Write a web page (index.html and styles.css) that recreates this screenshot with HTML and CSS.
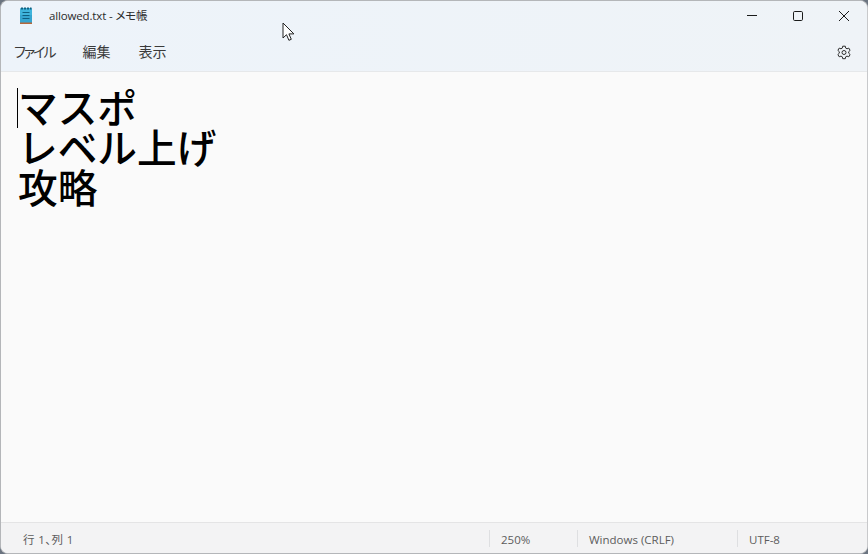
FILE: index.html
```html
<!DOCTYPE html>
<html lang="ja">
<head>
<meta charset="utf-8">
<title>allowed.txt - メモ帳</title>
<link rel="stylesheet" href="styles.css">
</head>
<body>
<div class="window">
  <div class="chrome">
    <div class="titlebar">
      <svg class="app-icon" width="16" height="18" viewBox="0 0 16 18">
        <rect x="2" y="1" width="12" height="15" rx="1" fill="#3fb4dc"/>
        <rect x="2" y="8" width="12" height="8" fill="#35a5d0"/>
        <path d="M3 0.500h2v2H3zM6 0.500h2v2H6zM9 0.500h2v2H9zM12 0.500h1.500v2H12z" fill="#12607f"/>
        <path d="M4.500 5.500h7M4.500 8.500h7M4.500 11.500h7" stroke="#0f5f80" stroke-width="1.200"/>
        <rect x="2" y="15.500" width="12" height="1.500" fill="#b5673a"/>
      </svg>
      <span class="title">allowed.txt - メモ帳</span>
      <div class="caption">
        <button class="cap-btn"><svg width="12" height="12" viewBox="0 0 12 12"><path d="M1 5.500h10" stroke="#1a1a1a" stroke-width="1"/></svg></button>
        <button class="cap-btn"><svg width="12" height="12" viewBox="0 0 12 12"><rect x="1.500" y="1.500" width="9" height="9" rx="1.200" fill="none" stroke="#1a1a1a" stroke-width="1"/></svg></button>
        <button class="cap-btn"><svg width="12" height="12" viewBox="0 0 12 12"><path d="M1 1l10 10M11 1L1 11" stroke="#1a1a1a" stroke-width="1"/></svg></button>
      </div>
    </div>
    <div class="menubar">
      <span class="menu-item menu-kana">ファイル</span>
      <span class="menu-item">編集</span>
      <span class="menu-item">表示</span>
      <svg class="gear" width="16" height="16" viewBox="0 0 16 16">
        <path d="M6.700 1.200h2.600l.4 1.900 1.300.7 1.800-.7 1.300 2.300-1.400 1.300v1.500l1.400 1.300-1.300 2.300-1.800-.7-1.300.7-.4 1.900H6.700l-.4-1.900-1.300-.7-1.800.7-1.300-2.300 1.400-1.300V6.700L1.900 5.400l1.300-2.300 1.800.7 1.300-.7z" fill="none" stroke="#2e2e2e" stroke-width="1" stroke-linejoin="round"/>
        <circle cx="8" cy="7.500" r="2" fill="none" stroke="#2e2e2e" stroke-width="1"/>
      </svg>
    </div>
  </div>
  <main class="editor">
    <span class="caret"></span>
    <div class="line">マスポ</div>
    <div class="line">レベル上げ</div>
    <div class="line">攻略</div>
  </main>
  <footer class="status">
    <span class="cell cell-pos">行 1、列 1</span>
    <span class="cell cell-zoom">250%</span>
    <span class="cell cell-eol">Windows (CRLF)</span>
    <span class="cell cell-enc">UTF-8</span>
  </footer>
</div>
<svg class="pointer" width="14" height="20" viewBox="0 0 14 20">
  <path d="M1 1v15l3.500-3.300 2.400 5.600 2.400-1-2.400-5.400h5z" fill="#fff" stroke="#222" stroke-width="1" stroke-linejoin="miter"/>
</svg>
</body>
</html>
```
FILE: styles.css
```css
html, body {
  margin: 0;
  padding: 0;
  width: 868px;
  height: 554px;
  overflow: hidden;
  background: #6b7480;
}
body {
  position: relative;
  font-family: "Open Sans", "Noto Sans CJK JP", sans-serif;
}
.window {
  box-sizing: border-box;
  width: 868px;
  height: 554px;
  display: flex;
  flex-direction: column;
  border: 1px solid #b4b6b9;
  border-right-color: #c8c9cb;
  border-radius: 8px;
  overflow: hidden;
  background: #fafafa;
}
.chrome {
  height: 71px;
  box-sizing: border-box;
  flex: none;
  display: flex;
  flex-direction: column;
  background: linear-gradient(90deg, #edf3fa, #eff3f7);
  border-bottom: 1px solid #e6e8ea;
}
.titlebar {
  height: 36px;
  flex: none;
  display: flex;
  align-items: center;
  padding-left: 17px;
}
.app-icon {
  flex: none;
  margin-top: -7px;
}
.title {
  margin-left: 15px;
  margin-top: -8px;
  font-size: 11.500px;
  letter-spacing: -0.15px;
  font-feature-settings: "palt";
  color: #2b2b2b;
}
.caption {
  margin-left: auto;
  margin-top: -7px;
  display: flex;
}
.cap-btn {
  width: 46px;
  height: 30px;
  padding: 0;
  border: 0;
  background: none;
  display: flex;
  align-items: center;
  justify-content: center;
}
.menubar {
  flex: 1;
  display: flex;
  align-items: center;
  padding: 0 15px 6px 13px;
  gap: 28px;
  margin-top: -1px;
}
.menu-item {
  font-size: 14px;
  font-feature-settings: "palt";
  color: #3a3a3a;
}
.menu-kana {
  letter-spacing: -2px;
  margin-right: 0;
}
.gear {
  margin-left: auto;
  margin-top: 4px;
}
.editor {
  position: relative;
  flex: 1;
  padding: 14px 0 0 17px;
  font-family: "Noto Sans CJK JP", sans-serif;
  font-size: 39.700px;
  font-weight: 500;
  line-height: 40px;
  color: #000;
  background: #fafafa;
}
.line {
  white-space: pre;
  height: 40px;
}
.caret {
  position: absolute;
  left: 16px;
  top: 16px;
  width: 1px;
  height: 40px;
  background: #000;
}
.status {
  height: 31px;
  flex: none;
  display: flex;
  align-items: center;
  box-sizing: border-box;
  background: #f3f3f4;
  border-top: 1px solid #e4e4e5;
  font-size: 11.500px;
  color: #5c5c5c;
}
.cell {
  box-sizing: border-box;
  height: 17px;
  line-height: 20px;
  padding-left: 11px;
  border-left: 1px solid #dedfe1;
  white-space: nowrap;
}
.cell-pos {
  width: 488px;
  border-left: 0;
  padding-left: 22px;
  letter-spacing: 0.4px;
  font-feature-settings: "palt";
}
.cell-zoom { width: 88px; }
.cell-eol { width: 160px; }
.cell-enc { flex: 1; }
.pointer {
  position: absolute;
  left: 282px;
  top: 22px;
}
```
